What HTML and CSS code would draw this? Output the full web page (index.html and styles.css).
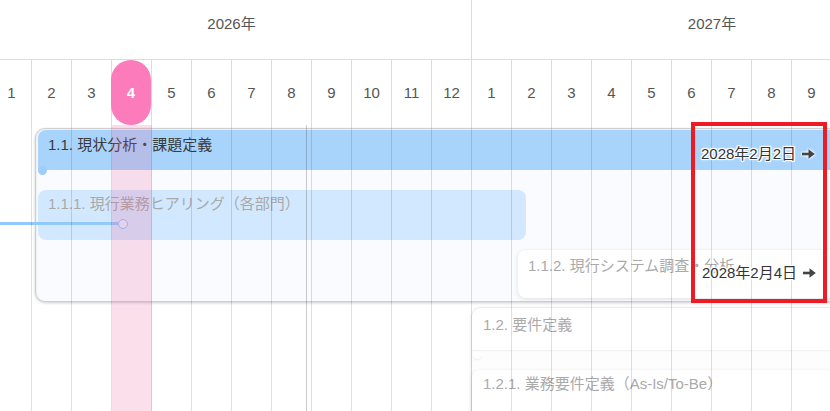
FILE: index.html
```html
<!DOCTYPE html>
<html lang="ja">
<head>
<meta charset="utf-8">
<title>Gantt</title>
<link rel="stylesheet" href="styles.css">
</head>
<body>
<div class="chart">
  <div class="canvas">
    <div class="years">
      <div class="year first">2026年</div>
      <div class="year">2027年</div>
    </div>
    <div class="months">
      <div class="m">1</div><div class="m">2</div><div class="m">3</div>
      <div class="m today"><span class="pill">4</span></div>
      <div class="m">5</div><div class="m">6</div><div class="m">7</div><div class="m">8</div>
      <div class="m">9</div><div class="m">10</div><div class="m">11</div><div class="m">12</div>
      <div class="m">1</div><div class="m">2</div><div class="m">3</div><div class="m">4</div>
      <div class="m">5</div><div class="m">6</div><div class="m">7</div><div class="m">8</div>
      <div class="m">9</div>
    </div>
    <div class="body">
      <div class="group g1">
        <div class="bar bar-main">1.1. 現状分析・課題定義</div>
        <div class="bar bar-sub" style="width:488px">1.1.1. 現行業務ヒアリング（各部門）</div>
        <div class="bar bar-card" style="margin-left:480px">1.1.2. 現行システム調査・分析</div>
      </div>
      <div class="group g2">
        <div class="bar bar-head">1.2. 要件定義</div>
        <div class="bar bar-card2">1.2.1. 業務要件定義（As-Is/To-Be）</div>
      </div>
      <div class="dep-line"></div>
      <div class="dep-dot"></div>
      <div class="grid-lines"></div>
      <div class="today-col"></div>
      <div class="today-line"></div>
    </div>
  </div>
  <div class="date-label l1">2028年2月2日 <svg class="arrow" width="13" height="10" viewBox="0 0 13 10"><path d="M0 5H8" stroke="#444" stroke-width="2.6"/><path d="M6.5 0.3L12.8 5L6.5 9.7Z" fill="#444"/></svg></div>
  <div class="date-label l2">2028年2月4日 <svg class="arrow" width="13" height="10" viewBox="0 0 13 10"><path d="M0 5H8" stroke="#444" stroke-width="2.6"/><path d="M6.5 0.3L12.8 5L6.5 9.7Z" fill="#444"/></svg></div>
  <div class="annot"></div>
</div>
</body>
</html>
```
FILE: styles.css
```css
* { box-sizing: border-box; }
html, body { margin: 0; padding: 0; background: #fff; }
body {
  font-family: "Liberation Sans", "Noto Sans CJK JP", sans-serif;
  font-size: 15px;
  color: #333;
}
.chart {
  position: relative;
  width: 830px;
  height: 411px;
  overflow: hidden;
}
.canvas {
  margin-left: -8px;
  width: 960px;
}
.years {
  display: grid;
  grid-template-columns: 480px 480px;
}
.year {
  height: 60px;
  border-bottom: 1px solid #dcdcdc;
  padding-top: 14px;
  line-height: 20px;
  text-align: center;
  color: #555;
}
.year.first { border-right: 1px solid #dcdcdc; }
.months {
  display: flex;
  height: 65px;
}
.m {
  flex: 0 0 40px;
  width: 40px;
  border-right: 1px solid #dcdcdc;
  display: flex;
  align-items: center;
  justify-content: center;
  color: #555;
}
.m.today { position: relative; }
.pill {
  position: absolute;
  left: -1px;
  top: 0;
  width: 40px;
  height: 65px;
  border-radius: 20px;
  background: #fb7bbb;
  color: #fff;
  display: flex;
  align-items: center;
  justify-content: center;
  font-weight: bold;
}
.body {
  position: relative;
  height: 286px;
}
.group {
  position: absolute;
  border-radius: 10px;
}
.g1 {
  left: 43px;
  top: 3px;
  width: 900px;
  height: 174px;
  border: 1px solid #cfcfcf;
  background: #fafbfe;
  box-shadow: 0 1px 3px rgba(0,0,0,0.2), inset 1px 1px 2px rgba(0,0,0,0.06);
  padding: 1px 0 0 2px;
}
.g2 {
  left: 479px;
  top: 182px;
  width: 500px;
  height: 200px;
  border: 1px solid #ececec;
  background: #fdfdfe;
  box-shadow: 0 1px 4px rgba(0,0,0,0.08);
  padding: 1px 0 0 0;
}
.bar {
  position: relative;
  line-height: 20px;
  white-space: nowrap;
}
.bar-main {
  height: 40px;
  background: #a8d4fc;
  border-radius: 8px 0 0 0;
  padding: 5px 10px;
  color: #3a3a3a;
}
.bar-main::after, .bar-head::after {
  content: "";
  position: absolute;
  left: 0;
  top: 36px;
  width: 9px;
  height: 9px;
  border-radius: 50%;
  background: #a0cdf9;
}
.bar-sub {
  margin-top: 20px;
  height: 50px;
  background: #d2e8fe;
  border-radius: 8px;
  padding: 4px 10px;
  color: #a8a8a8;
}
.bar-card {
  margin-top: 10px;
  height: 48px;
  background: #fff;
  border-radius: 8px 0 0 8px;
  box-shadow: 0 1px 4px rgba(0,0,0,0.12);
  padding: 6px 10px;
  color: #aaa;
}
.bar-head {
  height: 41px;
  background: #fff;
  border-radius: 8px 0 0 0;
  box-shadow: 0 1px 2px rgba(0,0,0,0.06);
  padding: 6px 11px;
  color: #aaa;
}
.bar-head::after {
  background: #fff;
  box-shadow: 0 1px 2px rgba(0,0,0,0.08);
  left: 1px;
  top: 42px;
  width: 8px;
  height: 8px;
}
.bar-card2 {
  margin-top: 20px;
  height: 60px;
  background: #fff;
  border-radius: 8px 0 0 8px;
  box-shadow: 0 1px 4px rgba(0,0,0,0.1);
  padding: 4px 11px;
  color: #aaa;
}
.dep-line {
  position: absolute;
  left: 8px;
  top: 97px;
  width: 118px;
  height: 3px;
  background: #90c9fa;
  z-index: 3;
}
.dep-dot {
  position: absolute;
  left: 126px;
  top: 94px;
  width: 10px;
  height: 10px;
  border-radius: 50%;
  border: 1.5px solid #8ec5fa;
  background: #e4efff;
  z-index: 3;
}
.grid-lines {
  position: absolute;
  inset: 0;
  background: repeating-linear-gradient(90deg, transparent 0 39px, rgba(0,0,0,0.13) 39px 40px);
  z-index: 5;
  pointer-events: none;
}
.today-col {
  position: absolute;
  left: 120px;
  top: 0;
  bottom: 0;
  width: 40px;
  background: rgba(236,100,160,0.2);
  z-index: 6;
}
.today-line {
  position: absolute;
  left: 314px;
  top: 0;
  bottom: 0;
  width: 1px;
  background: rgba(0,0,0,0.2);
  z-index: 6;
}
.date-label {
  position: absolute;
  z-index: 10;
  display: flex;
  align-items: center;
  gap: 2px;
  line-height: 20px;
  color: #333;
  white-space: nowrap;
  text-shadow: 1px 1px 0 #fff, -1px -1px 0 #fff, 1px -1px 0 #fff, -1px 1px 0 #fff, 0 1px 0 #fff, 0 -1px 0 #fff, 0 0 3px #fff, 0 0 3px #fff;
}
.arrow { margin-left: 4px; filter: drop-shadow(0 0 1px #fff) drop-shadow(0 0 1px #fff); }
.l1 { left: 701px; top: 144px; }
.l2 { left: 702px; top: 263px; }
.annot {
  position: absolute;
  left: 691px;
  top: 122px;
  width: 136px;
  height: 181px;
  border: 4px solid #ed1c24;
  z-index: 11;
}
```
